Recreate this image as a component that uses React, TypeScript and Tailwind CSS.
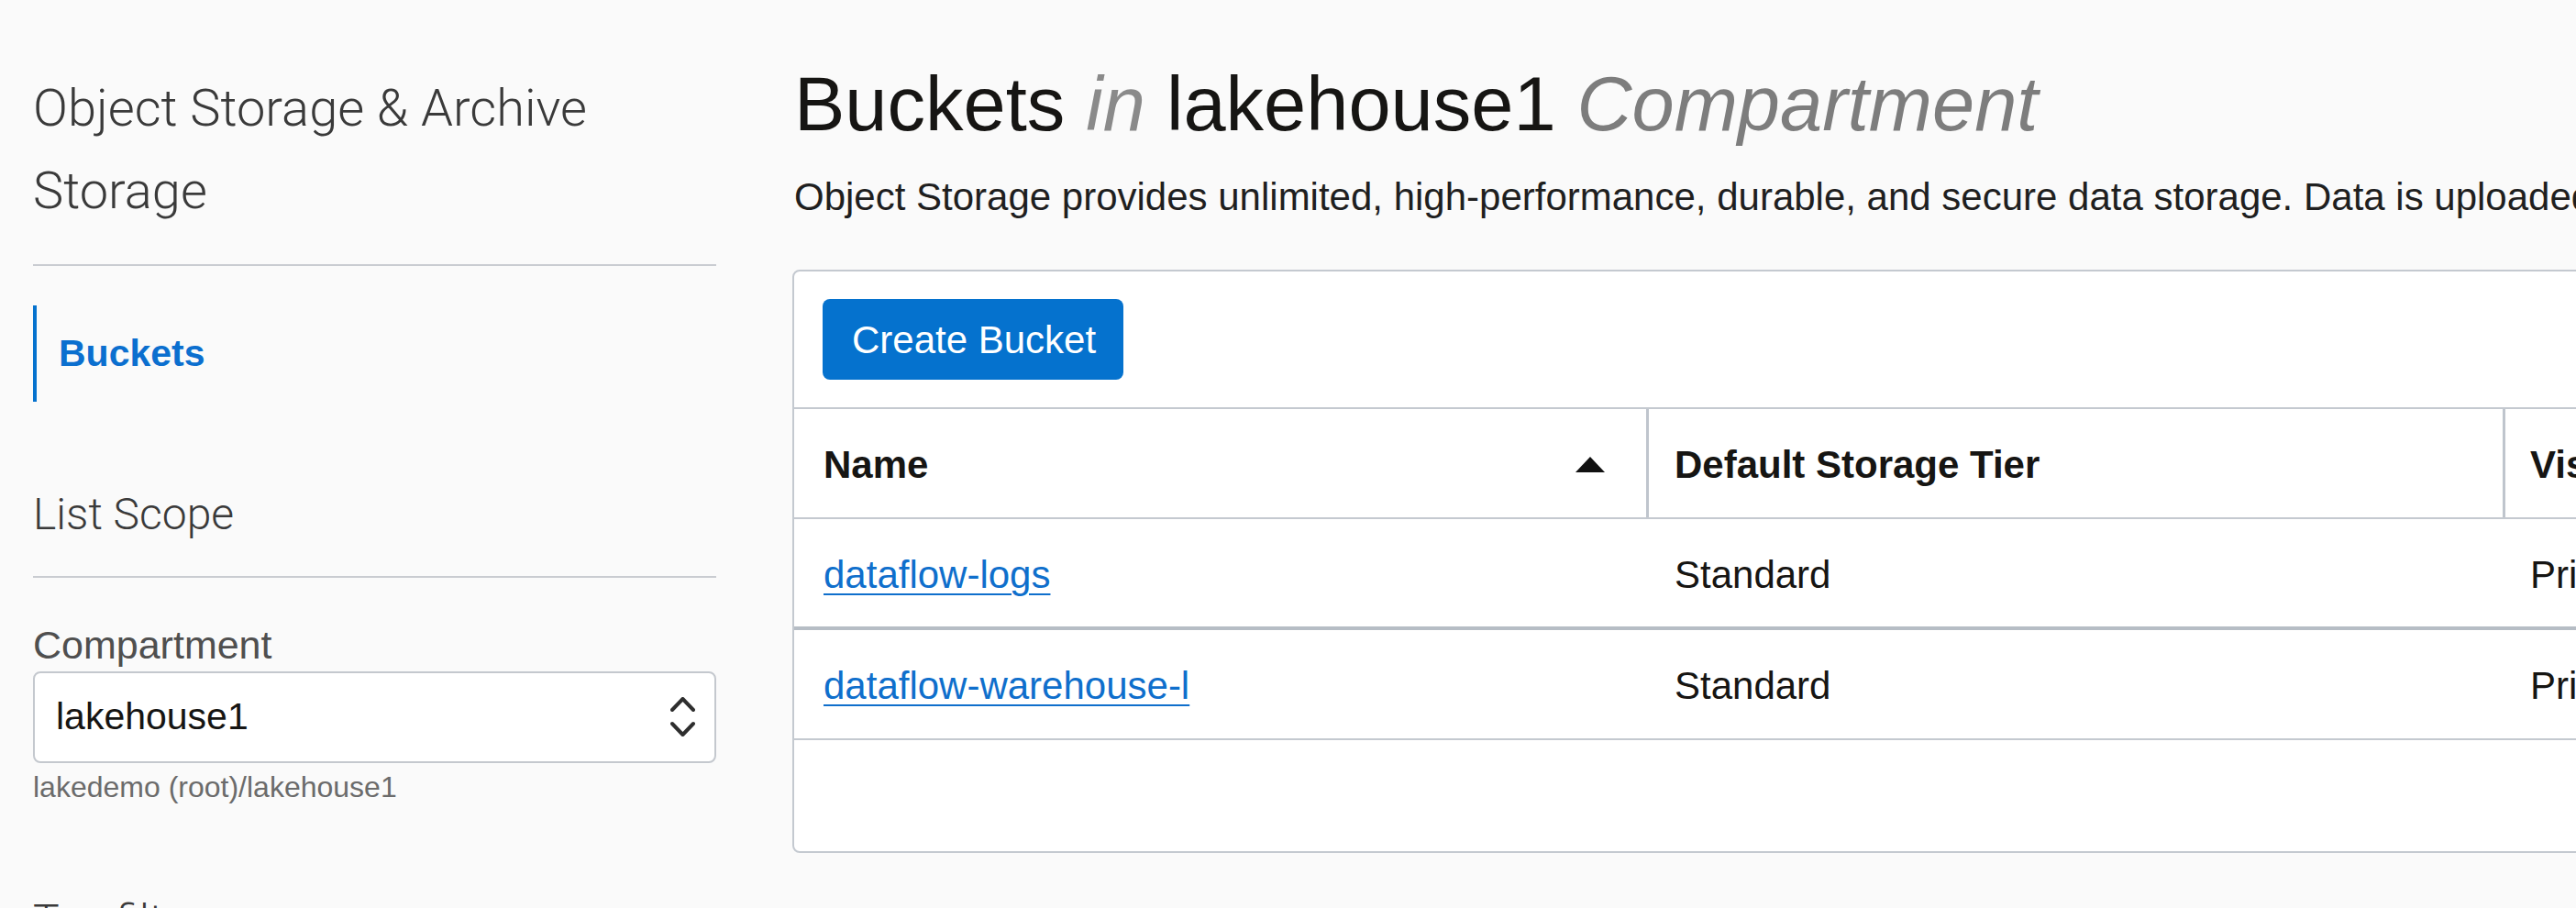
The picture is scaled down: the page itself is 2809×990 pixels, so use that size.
import React from "react";

function ChevronUpDown() {
  return (
    <svg width="27" height="44" viewBox="0 0 27 44" fill="none" stroke="#2e2e2e" strokeWidth="4" strokeLinecap="round" strokeLinejoin="round">
      <polyline points="2,14 13.5,2 25,14" />
      <polyline points="2,29 13.5,41 25,29" />
    </svg>
  );
}

function SortUp() {
  return (
    <svg width="32" height="17" viewBox="0 0 32 17">
      <polygon points="16,0 32,17 0,17" fill="#111" />
    </svg>
  );
}

export default function App() {
  return (
    <div className="flex w-[2809px] h-[990px] overflow-hidden bg-[#fafafa] font-['Liberation_Sans',Arial,sans-serif] text-[#161513]">
      {/* Sidebar */}
      <aside className="w-[781px] shrink-0 pl-[36px] pt-[73px]">
        <h2 className="font-['Roboto',sans-serif] font-light text-[56px] leading-[90px] text-[#3a3a3a]">
          Object Storage &amp; Archive
          <br />
          Storage
        </h2>
        <div className="mt-[35px] border-t-2 border-[#c9ccd1]" />
        <nav className="mt-[43px]">
          <div className="flex h-[105px] items-center border-l-4 border-[#0572ce] pl-[24px]">
            <span className="text-[41px] font-bold text-[#0b6fcf]">Buckets</span>
          </div>
        </nav>
        <h3 className="mt-[95px] font-['Roboto',sans-serif] font-light text-[48px] leading-[56px] text-[#3a3a3a]">
          List Scope
        </h3>
        <div className="mt-[39px] border-t-2 border-[#c9ccd1]" />
        <label className="mt-[49px] block text-[43px] leading-[48px] text-[#4f4f4f]">Compartment</label>
        <div className="mt-[5px] flex h-[100px] items-center justify-between rounded-[8px] border-2 border-[#c4c8ce] bg-white pl-[23px] pr-[21px]">
          <span className="text-[41px] text-[#161513]">lakehouse1</span>
          <ChevronUpDown />
        </div>
        <div className="mt-[8px] text-[32px] leading-[36px] text-[#6b6b6b]">lakedemo (root)/lakehouse1</div>
        <h3 className="mt-[100px] font-['Roboto',sans-serif] font-light text-[48px] leading-[56px] text-[#3a3a3a]">
          Tag filters
        </h3>
      </aside>

      {/* Main */}
      <main className="min-w-0 flex-1 pl-[83px] pt-[65px]">
        <h1 className="whitespace-nowrap pl-[2px] text-[83px] leading-[98px]">
          Buckets <em className="text-[#8a8a8a]">in</em> lakehouse1{" "}
          <em className="text-[#7d7d7d]">Compartment</em>
        </h1>
        <p className="mt-[27px] whitespace-nowrap pl-[2px] text-[42px] leading-[50px] text-[#1f1f1f]">
          Object Storage provides unlimited, high-performance, durable, and secure data storage. Data is uploaded as objects that are stored in buckets.
        </p>

        <div className="mt-[54px] h-[636px] w-[2200px] rounded-[8px] border-2 border-[#c4c9d0] bg-white">
          <div className="pl-[31px] pt-[30px]">
            <button className="flex h-[88px] w-[328px] items-center rounded-[8px] bg-[#0572ce] pl-[32px] text-[42px] text-white">
              Create Bucket
            </button>
          </div>
          <div className="mt-[30px]">
            {/* header */}
            <div className="flex h-[122px] border-y-2 border-[#c4c9d0] pt-[3px] text-[42px] font-bold">
              <div className="flex w-[929px] items-center justify-between pl-[32px] pr-[45px]">
                <span>Name</span>
                <SortUp />
              </div>
              <div className="-mt-[3px] w-[3px] bg-[#bfc5cd]" />
              <div className="flex w-[931px] items-center pl-[28px]">Default Storage Tier</div>
              <div className="-mt-[3px] w-[3px] bg-[#bfc5cd]" />
              <div className="flex flex-1 items-center pl-[27px]">Visibility</div>
            </div>
            {/* row 1 */}
            <div className="flex h-[121px] items-center border-b-4 border-[#b6bdc5] pt-[3px] text-[42px]">
              <div className="w-[932px] pl-[32px]">
                <a className="text-[#0f6fcc] underline decoration-2 underline-offset-[6px]">dataflow-logs</a>
              </div>
              <div className="w-[934px] pl-[28px]">Standard</div>
              <div className="flex-1 pl-[27px]">Private</div>
            </div>
            {/* row 2 */}
            <div className="flex h-[120px] items-center border-b-2 border-[#c4c9d0] pt-[3px] text-[42px]">
              <div className="w-[932px] pl-[32px]">
                <a className="text-[#0f6fcc] underline decoration-2 underline-offset-[6px]">dataflow-warehouse-l</a>
              </div>
              <div className="w-[934px] pl-[28px]">Standard</div>
              <div className="flex-1 pl-[27px]">Private</div>
            </div>
          </div>
        </div>
      </main>
    </div>
  );
}
